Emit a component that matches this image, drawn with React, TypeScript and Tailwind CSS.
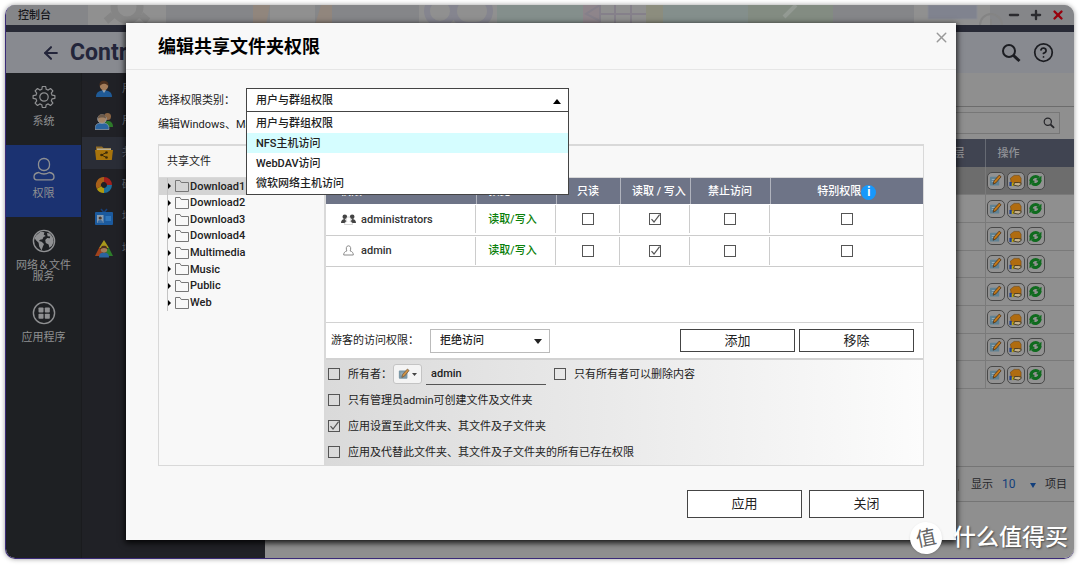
import { useState, type ReactNode } from "react"
import { ArrowLeft, CircleHelp, Minus, Plus, X } from "lucide-react"

const folders = ["Download1", "Download2", "Download3", "Download4", "Multimedia", "Music", "Public", "Web"]

const permissionTypes = ["用户与群组权限", "NFS主机访问", "WebDAV访问", "微软网络主机访问"]

const accounts = [
  { name: "administrators", group: true },
  { name: "admin", group: false },
]

function CheckBox({ label, id, checked = false }: { label?: string; id?: string; checked?: boolean }) {
  return (
    <span className="relative block size-3 shrink-0">
      <input
        id={id}
        type="checkbox"
        aria-label={label}
        defaultChecked={checked}
        className="peer block size-3 appearance-none border border-[#555] bg-transparent"
      />
      <svg viewBox="0 0 12 12" className="pointer-events-none absolute inset-0 hidden size-3 peer-checked:block">
        <path d="M2.5 6.2 5 9 10.6 1.6" fill="none" stroke="#555" strokeWidth="1.2" />
      </svg>
    </span>
  )
}

function GearIcon() {
  return (
    <svg viewBox="0 0 24 24" className="size-6" fill="none" stroke="currentColor" strokeWidth="1.2" strokeLinejoin="round">
      <path d="M10.3 1.5h3.4l.5 2.8 2 .8 2.3-1.6 2.4 2.4-1.6 2.3.8 2 2.8.5v2.6l-2.8.5-.8 2 1.6 2.3-2.4 2.4-2.3-1.6-2 .8-.5 2.8h-3.4l-.5-2.8-2-.8-2.3 1.6-2.4-2.4 1.6-2.3-.8-2-2.8-.5v-2.6l2.8-.5.8-2-1.6-2.3 2.4-2.4 2.3 1.6 2-.8z" />
      <circle cx="12" cy="12" r="4.2" />
    </svg>
  )
}

function PersonIcon() {
  return (
    <svg viewBox="0 0 24 24" className="size-6" fill="none" stroke="currentColor" strokeWidth="1.3">
      <rect x="6.5" y="1.5" width="11" height="12" rx="5.3" />
      <path d="M6.8 15.5C3.8 15.8 2 17.6 2 20c0 2 1 2.8 2.500 2.8h15c1.5 0 2.5-.8 2.5-2.8 0-2.4-1.8-4.200-4.800-4.500-1.600 1-3.200 1.500-5.200 1.500s-3.600-.5-5.200-1.500z" />
    </svg>
  )
}

function GlobeIcon() {
  return (
    <svg viewBox="0 0 24 24" className="size-6">
      <circle cx="12" cy="12" r="10.6" fill="none" stroke="currentColor" strokeWidth="1.4" />
      <path fill="currentColor" d="M4 6.5 8.5 2.800l4 .4-.8 2.300 2 1.500-2.200 1-1 2.200-2.500.6-1 1.200 2.700.8 2.300 2.200-1.200 2.800-1.300 3.700-2.300-4-.6-3.700L4 11.300 2.500 9zM15 4l3 .6 2.800 3.600.8 4.600-1.600 4-2.600 2-.8-3.400-2.800-1.400-.6-3 2-2 2.600.2.400-1.600-2.600-.4z" />
    </svg>
  )
}

function AppsIcon() {
  return (
    <svg viewBox="0 0 24 24" className="size-6" fill="currentColor">
      <circle cx="12" cy="12" r="10.6" fill="none" stroke="currentColor" strokeWidth="1.4" />
      <rect x="6.500" y="6.500" width="5" height="5" rx=".8" />
      <rect x="12.800" y="6.500" width="5" height="5" rx=".8" />
      <rect x="6.500" y="12.800" width="5" height="5" rx=".8" />
      <rect x="12.800" y="12.800" width="5" height="5" rx=".8" />
    </svg>
  )
}

const sections = [
  { label: "系统", icon: <GearIcon /> },
  { label: "权限", icon: <PersonIcon />, active: true },
  { label: "网络＆文件服务", icon: <GlobeIcon /> },
  { label: "应用程序", icon: <AppsIcon /> },
]

function SmallIcon({ children }: { children: ReactNode }) {
  return (
    <svg viewBox="0 0 18 18" className="size-[18px] shrink-0">
      {children}
    </svg>
  )
}

const subItems = [
  {
    label: "用户",
    icon: (
      <SmallIcon>
        <path d="M1 17c0-5 3-6.500 8-6.500s8 1.500 8 6.500z" fill="#1f5a96" />
        <path d="m7 10 2 3 2-3z" fill="#9aa6b0" />
        <circle cx="9" cy="6" r="4.200" fill="#a57c59" />
        <path d="M4.600 6C4 1.500 7 .5 9.500.8S14 3 13.400 6C12 5 11 3.500 9 3.800 7 4 6 5 4.600 6z" fill="#4b2f1e" />
      </SmallIcon>
    ),
  },
  {
    label: "用户群组",
    icon: (
      <SmallIcon>
        <circle cx="12.500" cy="4.500" r="3.500" fill="#8a6544" />
        <path d="M9 15c0-5 2-6 4-6s5 1 5 6z" fill="#2e7a2a" />
        <path d="M0 17.500c0-5 2-6.500 7-6.500s7 1.500 7 6.500z" fill="#2a64a0" stroke="#9aa2aa" strokeWidth=".7" />
        <circle cx="7" cy="7" r="4.300" fill="#a58465" stroke="#9aa2aa" strokeWidth=".8" />
        <path d="M3 6.500C3 3 5 2.300 7 2.300S11 3 11 6.500C9 5 5 5 3 6.500z" fill="#6c5a4a" />
      </SmallIcon>
    ),
  },
  {
    label: "共享文件夹",
    active: true,
    icon: (
      <SmallIcon>
        <path d="M1 2.500h6l1.500 1.500H16V14H1z" fill="#8f6a24" />
        <path d="M2 4.500h14v3H2z" fill="#b8ad92" />
        <path d="M0 6h18l-1.200 10H1.200z" fill="#a8740c" />
        <path d="M11.500 8.500 6.500 11l5 2.500" stroke="#3b2a08" strokeWidth="1" fill="none" />
        <circle cx="11.500" cy="8.500" r="1.300" fill="#3b2a08" />
        <circle cx="6.500" cy="11" r="1.300" fill="#3b2a08" />
        <circle cx="11.500" cy="13.500" r="1.300" fill="#3b2a08" />
      </SmallIcon>
    ),
  },
  {
    label: "磁盘容量限制",
    icon: (
      <SmallIcon>
        <g fill="none" strokeWidth="5">
          <path d="M9 3.500A5.500 5.500 0 0 1 14.500 9" stroke="#a3201c" />
          <path d="M14.500 9A5.500 5.500 0 0 1 9 14.500" stroke="#1e6f9c" />
          <path d="M9 14.500A5.500 5.500 0 0 1 4 11.500" stroke="#b19a10" />
          <path d="M4 11.500A5.500 5.500 0 0 1 9 3.500" stroke="#a8601a" />
        </g>
      </SmallIcon>
    ),
  },
  {
    label: "域安全认证",
    icon: (
      <SmallIcon>
        <path d="m6 1 3 3.500L12 1" stroke="#173f78" strokeWidth="1.500" fill="none" />
        <rect y="4" width="18" height="13" rx="1" fill="#1b5a9e" />
        <rect x="2" y="7" width="6.500" height="8" fill="#8a9cae" />
        <circle cx="5.200" cy="10" r="1.600" fill="#4e3a2c" />
        <path d="M2.500 15c0-2 1-3 2.700-3S8 13 8 15z" fill="#3b6ba0" />
        <path d="M10.500 8H16v5h-5.500z" fill="#2f75ba" />
      </SmallIcon>
    ),
  },
  {
    label: "域控制器",
    icon: (
      <SmallIcon>
        <path d="m9 0 5 8H4z" fill="#a89a1c" />
        <path d="m4.500 7 4.500 9H0z" fill="#a0421c" />
        <path d="m13.500 7 4.500 9H9z" fill="#2c7d2a" />
        <path d="M4 17.500c0-4 2-5 5-5s5 1 5 5z" fill="#2a64a0" />
        <circle cx="9" cy="9.500" r="3.200" fill="#a57c59" />
        <path d="M5.700 9C6 6 7.500 5.700 9 5.700s3 .3 3.300 3.300C10 7.500 8 7.500 5.700 9z" fill="#4b2f1e" />
      </SmallIcon>
    ),
  },
]

function PencilArt() {
  return (
    <>
      <rect x="1" y="3" width="10" height="9.500" rx="1" fill="#5f8294" />
      <path d="M3 6h5M3 8h4" stroke="#a9bcc5" strokeWidth=".8" />
      <path d="m4.500 11 .8-3.500L11 1.200 13 3 7.500 9.500z" fill="#c47a1a" stroke="#4a2c10" strokeWidth=".8" />
    </>
  )
}

const rowActions = [
  { label: "编辑", art: <PencilArt /> },
  {
    label: "权限设置",
    art: (
      <>
        <path d="M1.500 4.500 5.500 1.500H11l2 3v5.500H2V7z" fill="#b06c10" stroke="#6e430c" strokeWidth=".6" />
        <path d="M.5 8.500H3V13H.5z" fill="#1f3f91" />
        <path d="M3 9.500h2.500V13H3z" fill="#b9a510" />
        <path d="m5 12 1-2.800h4.500l2.500.6v1.700L10 13z" fill="#c3b08a" stroke="#2e2410" strokeWidth=".8" />
      </>
    ),
  },
  {
    label: "刷新",
    art: (
      <>
        <path d="M2.200 7.500A5 5 0 0 1 10.500 4" fill="none" stroke="#0f6b1e" strokeWidth="3.400" />
        <path d="M11.800 6.500A5 5 0 0 1 3.500 10" fill="none" stroke="#0f6b1e" strokeWidth="3.400" />
        <path d="m13.500 2-.3 6L7.500 6.500z" fill="#0f6b1e" />
        <path d="m.5 12 .3-6 5.700 1.500z" fill="#0f6b1e" />
      </>
    ),
  },
]

function SearchIcon({ className }: { className: string }) {
  return (
    <svg viewBox="0 0 20 20" className={className} fill="none" stroke="currentColor">
      <circle cx="8" cy="8" r="6" strokeWidth="2" />
      <path d="m12.500 12.500 6 5.500" strokeWidth="3" />
    </svg>
  )
}

// Faded desktop icons that show through the title bar
function DesktopStrip() {
  return (
    <svg viewBox="0 0 1068 20" width="1068" height="20" className="absolute left-0 top-0">
      <path d="M0 0h82v20H0zM160 0h87v20H160zM326 0h87v20H326zM821 0h87v20H821zM984 0h84v20H984z" fill="#858689" />
      <path d="M82 0h78v20H82zM264 0h45v20H264zM413 0h78v20H413zM594 0h46v20H594zM908 0h76v20H908z" fill="#909090" />
      <path d="M247 0h17l-4 20H247zM315 0h11v20H309z" fill="#91867d" />
      <path d="M491 0h86v20H491zM657 0h85v20H657z" fill="#848f8c" />
      <path d="M577 0h17v20H577z" fill="#8e858b" />
      <path d="M594 0v16l-14-7zM594 9h46M609 0v20M625 0v20" stroke="#85808a" strokeWidth="2" fill="none" />
      <path d="M640 0h17v20H640z" fill="#8c8d7e" />
      <path d="M742 0h85v20H742z" fill="#838c82" />
      <path d="m778 12 12-12" stroke="#939a93" strokeWidth="4" />
      <g fill="none" stroke="#85858f" strokeWidth="6">
        <circle cx="434" cy="6" r="13" />
        <rect x="448" y="-8" width="36" height="28" rx="14" />
      </g>
      <g fill="none" stroke="#858585">
        <circle cx="121" cy="2" r="13" strokeWidth="7" />
        <path d="m100 16 7-6M142 16l-7-6" strokeWidth="7" />
      </g>
      <path d="M922 0h49v14H922z" fill="#80838f" stroke="#8a8c93" />
      <g fill="none" stroke="#848484" strokeWidth="2">
        <circle cx="985" cy="20" r="11" />
        <path d="M985 14v6" />
      </g>
    </svg>
  )
}

function BackgroundTable() {
  return (
    <table className="h-[250px] w-full border-collapse text-[11px]">
      <thead>
        <tr className="h-7 bg-[#404451] text-[#8f9196]">
          <th className="pr-5 pt-[2px] text-right font-medium">快照层</th>
          <th className="w-[89px] border-l border-[#666a73] pl-3 pt-[2px] text-left font-medium">操作</th>
        </tr>
      </thead>
      <tbody>
        {folders.map((folder, i) => (
          <tr key={folder} className={`h-[27px] border-b border-[#7a7a7a] ${i === 0 ? "bg-[#6d6d6d]" : ""}`}>
            <td className="p-0" />
            <td className="border-l border-[#7a7a7a] p-0">
              <div className="flex gap-[2px] pl-px">
                {rowActions.map((action) => (
                  <button
                    key={action.label}
                    aria-label={`${action.label} ${folder}`}
                    className="flex size-[18px] items-center justify-center rounded-[5px] border border-[#494949] bg-[#929292]"
                  >
                    <svg viewBox="0 0 14 14" className="size-[13px]">
                      {action.art}
                    </svg>
                  </button>
                ))}
              </div>
            </td>
          </tr>
        ))}
      </tbody>
    </table>
  )
}

function ControlPanel() {
  return (
    <div className="flex flex-1 flex-col">
      <div className="relative flex h-5 items-center justify-between overflow-hidden bg-[#868789] pl-3 pr-[9px]">
        <DesktopStrip />
        <span className="relative pt-[2px] text-[11px] font-medium text-[#17181c]">控制台</span>
        <div className="relative flex items-center gap-2 text-[#2b2b2f]">
          <button aria-label="最小化"><Minus className="size-[14px]" strokeWidth={4} /></button>
          <button aria-label="最大化"><Plus className="size-[14px]" strokeWidth={4} /></button>
          <button aria-label="关闭窗口" className="text-[#98000c]"><X className="size-[14px]" strokeWidth={4} /></button>
        </div>
      </div>
      <div className="h-[7px] bg-[#282a36]" />
      <header className="flex h-[41px] items-center bg-[#888a90] pl-[35px] pr-5 text-[#23253a]">
        <button aria-label="返回"><ArrowLeft className="size-5" strokeWidth={2.5} /></button>
        <h1 className="ml-[9px] flex-1 pt-[2px] text-[23px] font-bold">ControlPanel</h1>
        <button aria-label="搜索" className="mr-3 text-[#1c1d22]"><SearchIcon className="size-5" /></button>
        <button aria-label="帮助" className="text-[#1c1d22]"><CircleHelp className="size-[21px]" /></button>
      </header>
      <div className="flex flex-1">
        <nav className="w-[75px] shrink-0 bg-[#1e2023] text-[11px] leading-[11px] text-[#8f9092]">
          {sections.map((section) => (
            <a
              key={section.label}
              href="#"
              className={`flex h-[72px] flex-col items-center gap-[7px] px-2 pt-3 text-center ${section.active ? "bg-[#1b3271]" : ""}`}
            >
              {section.icon}
              {section.label}
            </a>
          ))}
        </nav>
        <nav className="w-[184px] shrink-0 border-l border-[#1a1b1e] bg-[#202126] text-[11px] text-[#7b7d84]">
          {subItems.map((item) => (
            <a
              key={item.label}
              href="#"
              className={`flex h-8 items-center gap-[9px] pl-[13px] ${item.active ? "bg-[#2a2d36]" : ""}`}
            >
              {item.icon}
              {item.label}
            </a>
          ))}
        </nav>
        <section className="flex flex-1 flex-col bg-[#8f8f8f]">
          <div className="h-[34px] border-b border-[#6c6c6c]" />
          <div className="flex h-8 items-center justify-end pr-[14px]">
            <label className="flex h-[22px] w-60 items-center border border-[#777] pr-1 text-[#26262a]">
              <input aria-label="搜索文件夹" className="w-full bg-transparent outline-none" />
              <SearchIcon className="size-3 shrink-0" />
            </label>
          </div>
          <BackgroundTable />
          <div className="flex-1" />
          <footer className="mb-14 flex h-9 items-center justify-end border-y border-[#757575] pr-[7px] pt-[2px] text-[11px] text-[#26262a]">
            <span className="mr-3 h-3 w-px bg-[#74706a]" />
            <label htmlFor="page-size">显示</label>
            <span className="relative ml-[9px] mr-[9px]">
              <select id="page-size" className="w-[34px] appearance-none text-xs text-[#123f7c]">
                <option>10</option>
              </select>
              <svg viewBox="0 0 6 5" className="pointer-events-none absolute right-0 top-[7px] w-[6px]">
                <path d="M0 0h6L3 5z" fill="#123f7c" />
              </svg>
            </span>
            <span>项目</span>
          </footer>
        </section>
      </div>
    </div>
  )
}

function PermissionTypePicker() {
  const [open, setOpen] = useState(true)
  const [value, setValue] = useState(permissionTypes[0])

  return (
    <div className="relative w-[323px] text-[11px] font-medium text-[#222]">
      <button
        id="permission-type"
        aria-haspopup="listbox"
        aria-expanded={open}
        onClick={() => setOpen(!open)}
        className="flex h-6 w-full items-center justify-between border border-[#444] bg-white pl-[9px] pr-[7px] pt-[2px]"
      >
        {value}
        <svg viewBox="0 0 8 5" className="w-2"><path d="M0 5h8L4 0z" /></svg>
      </button>
      {open && (
        <ul role="listbox" className="absolute inset-x-0 top-full z-10 -mt-px border border-[#444] bg-white py-px">
          {permissionTypes.map((type) => (
            <li
              key={type}
              role="option"
              aria-selected={type === value}
              onClick={() => {
                setValue(type)
                setOpen(false)
              }}
              className={`flex h-5 items-center pl-[9px] pt-[2px] hover:bg-[#d5fdff] ${type === "NFS主机访问" ? "bg-[#d5fdff]" : ""}`}
            >
              {type}
            </li>
          ))}
        </ul>
      )}
    </div>
  )
}

function FolderTree() {
  return (
    <div className="w-[167px] shrink-0 border-r-2 border-[#d9d9d9]">
      <ul className="grid h-[133px] auto-rows-fr text-[11px] font-medium text-[#222]">
        {folders.map((folder, i) => (
          <li key={folder} className={`flex items-center pl-2 ${i === 0 ? "bg-[#d4d4d4]" : ""}`}>
            <span className="flex h-full items-center border-l border-[#c4c4c4]">
              <svg viewBox="0 0 3 6" className="w-[3px]"><path d="M0 0v6l3-3z" /></svg>
            </span>
            <svg viewBox="0 0 14 12" className="ml-1 w-[14px]" fill="none" stroke="#777">
              <path d="M.5 11.500V.5h4.500l1.200 2h7.300v9z" />
            </svg>
            <button className="ml-px pt-px">{folder}</button>
          </li>
        ))}
      </ul>
    </div>
  )
}

function AccountIcon({ group }: { group: boolean }) {
  if (group) {
    return (
      <svg viewBox="0 0 15 11" className="w-[15px]">
        <g fill="#444">
          <circle cx="3.800" cy="2.800" r="2.300" />
          <circle cx="11.200" cy="2.800" r="2.300" />
          <path d="M0 9c0-2.500 1.500-4 4-4l2 4zM15 9c0-2.500-1.500-4-4-4L9 9z" />
        </g>
        <path d="M3.500 10.500c0-2 1-2.700 2.500-3C5 6 4.800 3 7.500 3S10 6 9 7.500c1.500.3 2.500 1 2.500 3z" fill="#fff" stroke="#bbb" strokeWidth=".6" />
      </svg>
    )
  }
  return (
    <svg viewBox="0 0 11 11" className="mx-[2px] w-[11px]" fill="none" stroke="#8a8a8a">
      <path d="M3.800 6C2.800 3.500 3.200.8 5.500.8S8.200 3.500 7.200 6c2 .5 3.100 1.700 3.100 4H.7c0-2.300 1.100-3.500 3.100-4z" />
    </svg>
  )
}

function PermissionTable() {
  return (
    <table className="w-full table-fixed border-collapse text-[11px]">
      <colgroup>
        <col className="w-[150px]" />
        <col className="w-20" />
        <col className="w-16" />
        <col className="w-[70px]" />
        <col className="w-20" />
        <col />
      </colgroup>
      <thead>
        <tr className="h-[26px] bg-[#6e7487] text-white [&>th]:border-[#b0b3bd] [&>th]:px-0 [&>th]:pb-0 [&>th]:pt-[2px] [&>th]:font-medium [&>th:not(:last-child)]:border-r">
          <th><div className="pl-[14px] text-left">权限</div></th>
          <th><div className="pl-3 text-left">预览</div></th>
          <th>只读</th>
          <th><div className="whitespace-nowrap pl-2">读取 / 写入</div></th>
          <th>禁止访问</th>
          <th>
            <div className="flex items-center justify-center">
              特别权限
              <span className="flex size-[15px] items-center justify-center rounded-full bg-[#1798fb] text-xs font-bold">i</span>
            </div>
          </th>
        </tr>
      </thead>
      <tbody>
        {accounts.map((account) => (
          <tr key={account.name} className="h-[31px] border-b border-[#ccc] [&>td]:p-0 [&>td>div]:flex [&>td>div]:h-7 [&>td>div]:items-center [&>td>div]:border-[#ccc] [&>td:not(:last-child)>div]:border-r">
            <td>
              <div className="gap-[5px] pl-[15px] font-medium text-[#333]">
                <AccountIcon group={account.group} />
                <span className="pt-[2px]">{account.name}</span>
              </div>
            </td>
            <td><div className="justify-center pr-[6px] pt-[2px] font-medium text-[#0a800a]">读取/写入</div></td>
            <td><div className="justify-center"><CheckBox label={`${account.name} 只读`} /></div></td>
            <td><div className="justify-center"><CheckBox label={`${account.name} 读取/写入`} checked /></div></td>
            <td><div className="justify-center"><CheckBox label={`${account.name} 禁止访问`} /></div></td>
            <td><div className="justify-center"><CheckBox label={`${account.name} 特别权限`} /></div></td>
          </tr>
        ))}
      </tbody>
    </table>
  )
}

function OptionRow({ id, label, checked }: { id: string; label: string; checked?: boolean }) {
  return (
    <div className="flex h-[26px] items-center gap-2">
      <CheckBox id={id} checked={checked} />
      <label htmlFor={id} className="pt-[2px]">{label}</label>
    </div>
  )
}

function FolderOptions() {
  return (
    <div className="bg-linear-to-r from-[#dadada] to-[#fcfcfc] pl-[2px] pt-px text-[11px] text-[#222]">
      <div className="flex h-[26px] items-center">
        <CheckBox id="owner" />
        <label htmlFor="owner" className="ml-2 pt-[2px]">所有者：</label>
        <button aria-label="选择所有者" className="ml-px flex h-5 w-[29px] items-center justify-center gap-[2px] rounded-[3px] border border-[#c4c4c4] bg-[#f4f4f4]">
          <svg viewBox="0 0 14 14" className="size-3 opacity-80"><PencilArt /></svg>
          <svg viewBox="0 0 5 3" className="w-[5px]"><path d="M0 0h5L2.500 3z" fill="#444" /></svg>
        </button>
        <input aria-label="所有者名称" defaultValue="admin" className="ml-1 h-[22px] w-[120px] border-b border-[#555] bg-transparent pl-[5px] font-medium" />
        <span className="ml-2 flex items-center gap-2">
          <CheckBox id="owner-delete" />
          <label htmlFor="owner-delete" className="pt-[2px]">只有所有者可以删除内容</label>
        </span>
      </div>
      <OptionRow id="admin-create" label="只有管理员admin可创建文件及文件夹" />
      <OptionRow id="apply-sub" label="应用设置至此文件夹、其文件及子文件夹" checked />
      <OptionRow id="replace-all" label="应用及代替此文件夹、其文件及子文件夹的所有已存在权限" />
    </div>
  )
}

function DialogButton({ children, className }: { children: ReactNode; className: string }) {
  return (
    <button className={`w-[115px] border border-[#444] bg-white text-[13px] text-[#222] ${className}`}>
      {children}
    </button>
  )
}

function PermissionDialog() {
  return (
    <div
      role="dialog"
      aria-labelledby="dialog-title"
      className="absolute left-[126px] right-[124px] top-[23px] bg-[#f8f8f8] text-[#222] shadow-[0_2px_6px_1px_rgba(0,0,0,0.85)]"
    >
      <div className="flex h-[47px] items-center justify-between border-b border-[#e6e6e6] pl-8 pr-[6px]">
        <h2 id="dialog-title" className="pt-[2px] text-lg font-bold text-black">编辑共享文件夹权限</h2>
        <button aria-label="关闭" className="mb-[18px] text-[#999]"><X className="size-[17px]" strokeWidth={2} /></button>
      </div>
      <div className="px-8 pb-[22px] pt-[18px]">
        <div className="flex items-center text-[11px]">
          <label htmlFor="permission-type" className="w-[88px] pt-[2px]">选择权限类别：</label>
          <PermissionTypePicker />
        </div>
        <p className="mt-1 text-[11px] leading-[17px]">编辑Windows、Mac、FTP和网络访问权限</p>

        <div className="mt-[11px] border border-t-2 border-[#d9d9d9]">
          <h3 className="flex h-8 items-center border-b border-[#d9d9d9] pl-2 pt-[2px] text-[11px]">共享文件</h3>
          <div className="flex">
            <FolderTree />
            <div className="flex-1">
              <div className="bg-white">
                <div className="min-h-36">
                  <PermissionTable />
                </div>
                <div className="flex h-[38px] items-center border-b-2 border-t border-[#d2d2d2] pl-[5px] pr-[9px] text-[11px]">
                  <label htmlFor="guest-access" className="w-[99px] pt-[2px]">游客的访问权限：</label>
                  <span className="relative">
                    <select id="guest-access" className="h-6 w-[120px] appearance-none border border-[#bbb] bg-white pl-[9px] pt-[2px] font-medium">
                      <option>拒绝访问</option>
                      <option>只读</option>
                      <option>读取/写入</option>
                    </select>
                    <svg viewBox="0 0 8 5" className="pointer-events-none absolute right-2 top-[10px] w-2">
                      <path d="M0 0h8L4 5z" fill="#222" />
                    </svg>
                  </span>
                  <span className="ml-auto flex gap-1">
                    <DialogButton className="h-[23px]">添加</DialogButton>
                    <DialogButton className="h-[23px]">移除</DialogButton>
                  </span>
                </div>
              </div>
              <FolderOptions />
            </div>
          </div>
        </div>

        <div className="mt-6 flex justify-end gap-[7px]">
          <DialogButton className="h-7">应用</DialogButton>
          <DialogButton className="h-7">关闭</DialogButton>
        </div>
      </div>
    </div>
  )
}

function Watermark() {
  return (
    <div className="absolute bottom-[11px] right-3 flex items-center gap-[11px] text-[23px] font-medium leading-8 text-white [text-shadow:1px_1px_2px_rgba(0,0,0,0.5)]">
      <span className="flex size-8 -rotate-12 items-center justify-center rounded-full bg-white text-xl font-normal text-[#666] shadow [text-shadow:none]">
        值
      </span>
      什么值得买
    </div>
  )
}

export default function App() {
  return (
    <main className="relative flex min-h-screen bg-white pb-[6px] pl-[5px] pr-[6px] pt-[5px] font-['Roboto','Noto_Sans_CJK_SC',sans-serif]">
      <div className="flex flex-1 overflow-hidden rounded-[10px] border-b border-l border-[#3a2a78] shadow-[0_0_5px_rgba(0,0,0,0.4)]">
        <ControlPanel />
      </div>
      <PermissionDialog />
      <Watermark />
    </main>
  )
}
